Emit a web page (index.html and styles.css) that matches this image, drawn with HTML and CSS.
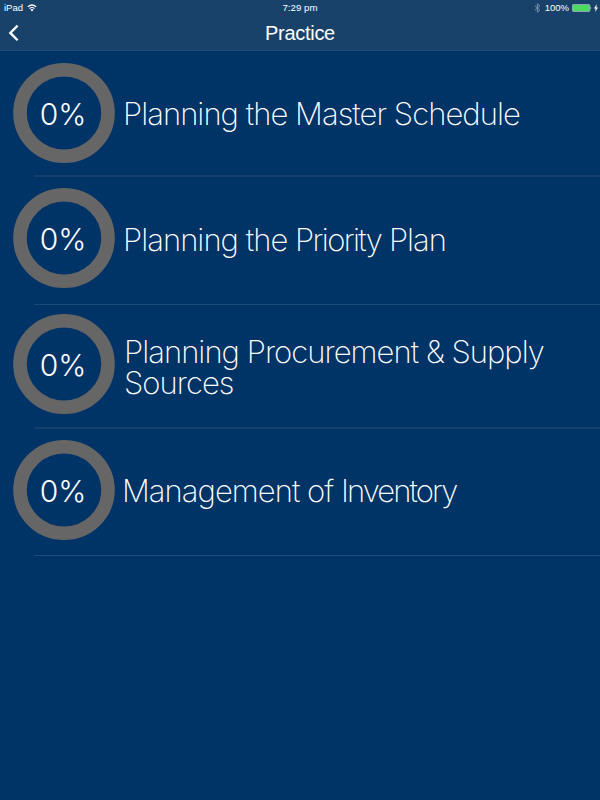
FILE: index.html
```html
<!DOCTYPE html>
<html lang="en">
<head>
    <meta charset="UTF-8">
    <meta name="viewport" content="width=device-width, initial-scale=1.0">
    <title>Practice</title>
    <link rel="stylesheet" href="styles.css">
</head>
<body>
    <header class="header">
        <div class="status-bar">
            <div class="status-left">
                <span>iPad</span>
                <svg class="wifi" viewBox="0 0 10 8" width="10" height="8">
                    <path d="M0.8 2.9 Q5 -0.9 9.2 2.9 M2.5 4.6 Q5 2.4 7.5 4.6" fill="none" stroke="#fff" stroke-width="1.2"/>
                    <path d="M3.4 5.7 Q5 4.5 6.6 5.7 L5 7.4 Z" fill="#fff"/>
                </svg>
            </div>
            <div class="status-time">7:29 pm</div>
            <div class="status-right">
                <svg class="bluetooth" viewBox="0 0 7 10" width="7" height="10">
                    <path d="M0.8 2.7 L5.8 7.1 L3.4 9.3 V0.7 L5.8 2.9 L0.8 7.3" fill="none" stroke="#8199b1" stroke-width="0.9"/>
                </svg>
                <span class="battery-text">100%</span>
                <svg class="battery" viewBox="0 0 20 8" width="20" height="8">
                    <rect x="0.4" y="0.4" width="17.4" height="7.2" rx="1" fill="#4cd964" stroke="#a5b5c5" stroke-width="0.8"/>
                    <path d="M18.5 2.5 Q20 4 18.5 5.5 Z" fill="#d5dde5"/>
                </svg>
                <svg class="bolt" viewBox="0 0 4 8" width="4" height="8">
                    <path d="M2.8 0 L0 4.4 H1.7 L1.1 8 L4 3.4 H2.3 Z" fill="#fff"/>
                </svg>
            </div>
        </div>
        <div class="nav-bar">
            <svg class="back" viewBox="0 0 12 18" width="12" height="18">
                <path d="M9.6 1.6 L2.3 8.9 L9.6 16.2" fill="none" stroke="#fff" stroke-width="2.3"/>
            </svg>
            <h1 class="title">Practice</h1>
        </div>
    </header>

    <main class="list">
        <div class="item master">
            <div class="content">
                <div class="progress">
                    <svg class="ring" viewBox="0 0 102 100" width="102" height="100">
                        <ellipse cx="51" cy="50" rx="44" ry="43.2" fill="none" stroke="#666" stroke-width="13.6"/>
                    </svg>
                    <span class="percent">0%</span>
                </div>
                <div class="label">Planning the Master Schedule</div>
            </div>
            <div class="divider soft"></div>
        </div>
        <div class="item priority">
            <div class="content">
                <div class="progress">
                    <svg class="ring" viewBox="0 0 102 100" width="102" height="100">
                        <ellipse cx="51" cy="50" rx="44" ry="43.2" fill="none" stroke="#666" stroke-width="13.6"/>
                    </svg>
                    <span class="percent">0%</span>
                </div>
                <div class="label">Planning the <span class="tight">Priority</span> Plan</div>
            </div>
            <div class="divider"></div>
        </div>
        <div class="item procurement">
            <div class="content">
                <div class="progress">
                    <svg class="ring" viewBox="0 0 102 100" width="102" height="100">
                        <ellipse cx="51" cy="50" rx="44" ry="43.2" fill="none" stroke="#666" stroke-width="13.6"/>
                    </svg>
                    <span class="percent">0%</span>
                </div>
                <div class="label">Planning Procurement &amp; Supply<br>Sources</div>
            </div>
            <div class="divider soft"></div>
        </div>
        <div class="item inventory">
            <div class="content">
                <div class="progress">
                    <svg class="ring" viewBox="0 0 102 100" width="102" height="100">
                        <ellipse cx="51" cy="50" rx="44" ry="43.2" fill="none" stroke="#666" stroke-width="13.6"/>
                    </svg>
                    <span class="percent">0%</span>
                </div>
                <div class="label">Management of <span class="tight">Inventory</span></div>
            </div>
            <div class="divider"></div>
        </div>
    </main>
</body>
</html>
```
FILE: styles.css
```css
* {
    box-sizing: border-box;
}

body {
    margin: 0;
    height: 800px;
    overflow: hidden;
    background-color: #003366;
    color: white;
    font-family: "Liberation Sans", Arial, sans-serif;
}

.header {
    height: 51px;
    background-color: #19426b;
    border-bottom: 1px solid #204a76;
}

.status-bar {
    display: grid;
    grid-template-columns: 1fr auto 1fr;
    align-items: center;
    height: 16px;
    padding: 0 2px 0 4px;
    font-size: 9.5px;
    line-height: 16px;
}

.status-left,
.status-right {
    display: flex;
    align-items: center;
}

.status-left {
    gap: 4px;
}

.status-right {
    justify-content: flex-end;
}

.status-time {
    padding-right: 2px;
    font-size: 9.7px;
}

.battery-text {
    margin: 0 3px 0 4px;
}

.bolt {
    margin-left: 2px;
}

.nav-bar {
    display: grid;
    grid-template-columns: 1fr auto 1fr;
    align-items: center;
    height: 34px;
}

.back {
    margin-left: 8px;
}

.title {
    margin: 0;
    font-size: 20px;
    font-weight: normal;
    line-height: 34px;
    letter-spacing: -0.3px;
}

.item {
    display: flex;
    flex-direction: column;
    justify-content: space-between;
}

.master {
    height: 126px;
    padding-top: 12px;
}

.priority {
    height: 128px;
    padding-top: 11px;
}

.procurement {
    height: 124px;
    padding-top: 9px;
}

.inventory {
    height: 127px;
    padding-top: 11px;
}

.content {
    display: flex;
    align-items: center;
    height: 100px;
    padding-left: 13px;
}

.progress {
    display: grid;
    place-items: center;
    width: 102px;
    height: 100px;
}

.ring,
.percent {
    grid-area: 1 / 1;
}

.percent {
    padding: 2px 2px 0 0;
    font-family: Inter, "Liberation Sans", sans-serif;
    font-size: 30px;
    font-weight: 300;
    line-height: 32px;
}

.label {
    margin-left: 8px;
    font-family: Inter, "Liberation Sans", sans-serif;
    font-size: 31px;
    font-weight: 200;
    line-height: 31px;
    letter-spacing: -0.95px;
    white-space: nowrap;
}

.priority .label {
    padding-top: 2px;
}

.procurement .label {
    padding-top: 5px;
    margin-left: 9px;
}

.inventory .label {
    padding-top: 1px;
    margin-left: 7px;
    letter-spacing: -0.95px;
}

.label .tight {
    letter-spacing: -1.6px;
}

.inventory .tight {
    letter-spacing: -1.9px;
}

.divider {
    height: 1px;
    margin-left: 34px;
    background-color: #1f4b78;
}

.soft {
    height: 2px;
    background-color: #153f6c;
}
```
